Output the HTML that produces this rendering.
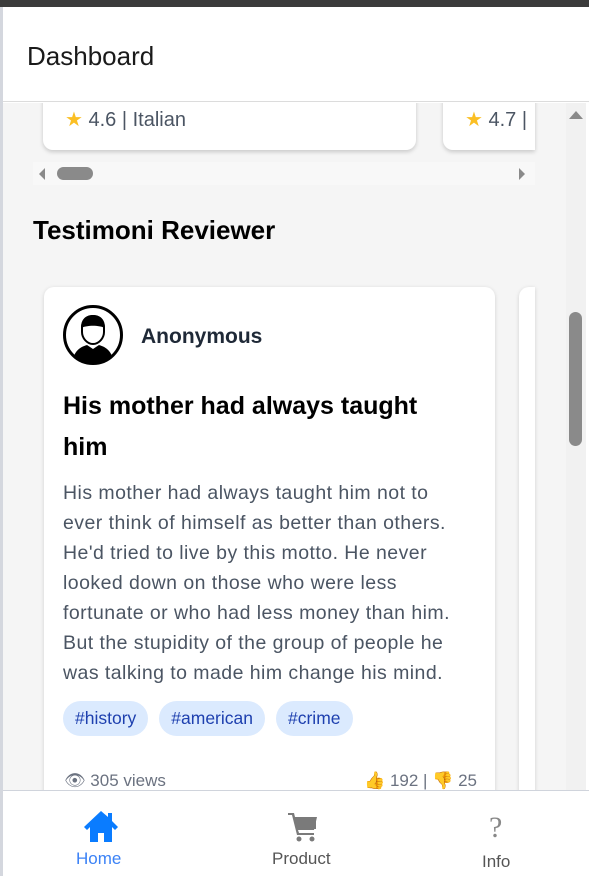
<!DOCTYPE html>
<html><head><meta charset="utf-8"><style>
*{box-sizing:border-box;margin:0;padding:0}
body{width:589px;height:876px;overflow:hidden;font-family:"Liberation Sans",sans-serif;background:#fff;position:relative}
.top{position:absolute;left:0;top:0;width:589px;height:7px;background:#3b3b3b}
.lb{position:absolute;left:0;top:7px;width:3px;height:869px;background:#d4d7de}
.hdr{position:absolute;left:3px;top:7px;width:586px;height:95px;background:#fff;border-bottom:1px solid #dcdcdc}
.hdr h1{position:absolute;left:24px;top:34px;font-size:26px;font-weight:normal;color:#1a1a1a}
.main{position:absolute;left:3px;top:103px;width:563px;height:687px;background:#f5f5f5;overflow:hidden}
.card1{position:absolute;left:40px;top:-20px;width:373px;height:67px;background:#fff;border-radius:10px;box-shadow:0 2px 4px rgba(0,0,0,.18)}
.card2{position:absolute;left:440px;top:-20px;width:92px;height:67px;background:#fff;border-radius:10px 0 0 10px;box-shadow:0 2px 4px rgba(0,0,0,.18)}
.rt{position:absolute;top:24px;font-size:20px;color:#4b5563}
.hs{position:absolute;left:30px;top:59px;width:502px;height:23px;background:#f8f8f8}
.h2{position:absolute;left:30px;top:112px;font-size:26px;font-weight:bold;color:#000}
.tc{position:absolute;left:41px;top:184px;width:451px;height:520px;background:#fff;border-radius:10px;box-shadow:0 1px 4px rgba(0,0,0,.15)}
.tc2{position:absolute;left:516px;top:184px;width:16px;height:520px;background:#fff;border-radius:10px 0 0 10px;box-shadow:0 1px 4px rgba(0,0,0,.15)}
.vs{position:absolute;left:566px;top:103px;width:20px;height:687px;background:#f1f1f1}
.nav{position:absolute;left:3px;top:790px;width:586px;height:86px;background:#fff;border-top:1px solid #d0d4dc}
.tag{display:inline-block;background:#dbeafe;color:#1e40af;border-radius:18px;padding:7px 12px;font-size:17.5px;margin-right:11px}
</style></head><body>
<div class="top"></div><div class="lb"></div>
<div class="hdr"><h1>Dashboard</h1></div>
<div class="main">
 <div class="card1"><div class="rt" style="left:22px"><span style="color:#fbbf24">★</span> 4.6 | Italian</div></div>
 <div class="card2"><div class="rt" style="left:22px"><span style="color:#fbbf24">★</span> 4.7 |</div></div>
 <div class="hs">
  <div style="position:absolute;left:6px;top:6px;width:0;height:0;border-top:6px solid transparent;border-bottom:6px solid transparent;border-right:6px solid #8a8a8a"></div>
  <div style="position:absolute;left:24px;top:5px;width:36px;height:13px;border-radius:7px;background:#8a8a8a"></div>
  <div style="position:absolute;left:486px;top:6px;width:0;height:0;border-top:6px solid transparent;border-bottom:6px solid transparent;border-left:6px solid #8a8a8a"></div>
 </div>
 <div class="h2">Testimoni Reviewer</div>
 <div class="tc">
  <svg style="position:absolute;left:18px;top:17px" width="62" height="62" viewBox="0 0 62 62"><circle cx="31" cy="31" r="28.5" fill="#fff" stroke="#000" stroke-width="3"/><path d="M12 52c3-8 10-10 13-11l6 4 6-4c3 1 10 3 13 11a28 28 0 0 1-38 0z" fill="#000"/><path d="M20 24c0-8 5-12 11-12s11 4 11 12l0 4c0 6-5 12-11 12s-11-6-11-12z" fill="#fff" stroke="#000" stroke-width="2"/><path d="M19 24c0-9 5-13 12-13s12 4 12 13c-6-3-18-3-24 0z" fill="#000"/></svg>
  <div style="position:absolute;left:97px;top:38px;font-size:21px;font-weight:bold;color:#1f2937">Anonymous</div>
  <div style="position:absolute;left:19px;top:99px;width:390px;font-size:25px;font-weight:bold;color:#000;line-height:41px">His mother had always taught him</div>
  <div style="position:absolute;left:19px;top:191px;white-space:nowrap;font-size:19.5px;letter-spacing:0.45px;color:#4b5563;line-height:30px">His mother had always taught him not to<br>ever think of himself as better than others.<br>He'd tried to live by this motto. He never<br>looked down on those who were less<br>fortunate or who had less money than him.<br>But the stupidity of the group of people he<br>was talking to made him change his mind.</div>
  <div style="position:absolute;left:19px;top:414px;white-space:nowrap"><span class="tag">#history</span><span class="tag">#american</span><span class="tag">#crime</span></div>
  <div style="position:absolute;left:20px;top:484px;font-size:17px;color:#6b7280">👁 305 views</div>
  <div style="position:absolute;right:18px;top:484px;font-size:17px;color:#6b7280">👍 192 | 👎 25</div>
 </div>
 <div class="tc2"></div>
</div>
<div class="vs">
 <div style="position:absolute;left:3px;top:8px;width:0;height:0;border-left:7px solid transparent;border-right:7px solid transparent;border-bottom:8px solid #8a8a8a"></div>
 <div style="position:absolute;left:3px;top:209px;width:13px;height:134px;border-radius:7px;background:#8a8a8a"></div>
</div>
<div class="nav">
 <svg style="position:absolute;left:80px;top:18px" width="36" height="34" viewBox="0 0 36 34"><path d="M18 2L1 18l3 3 3-3v15h8v-9h6v9h8V18l3 3 3-3-6-6V4h-4v4z" fill="#0a7cff"/></svg>
 <div style="position:absolute;left:73px;top:58px;font-size:17px;color:#3b82f6">Home</div>
 <svg style="position:absolute;left:284px;top:20px" width="32" height="32" viewBox="0 0 32 32"><path d="M1 2h6l1 4h22l-3 13H11l1 3h15v2H10L5 4H1z" fill="#7a7a7a"/><rect x="9" y="7" width="20" height="11" fill="#7a7a7a"/><circle cx="12" cy="28" r="2.5" fill="#7a7a7a"/><circle cx="25" cy="28" r="2.5" fill="#7a7a7a"/></svg>
 <div style="position:absolute;left:269px;top:58px;font-size:17px;color:#555">Product</div>
 <div style="position:absolute;left:486px;top:20px;font-size:30px;color:#888;font-family:'Liberation Serif',serif">?</div>
 <div style="position:absolute;left:479px;top:61px;font-size:17px;color:#555">Info</div>
</div>
</body></html>
